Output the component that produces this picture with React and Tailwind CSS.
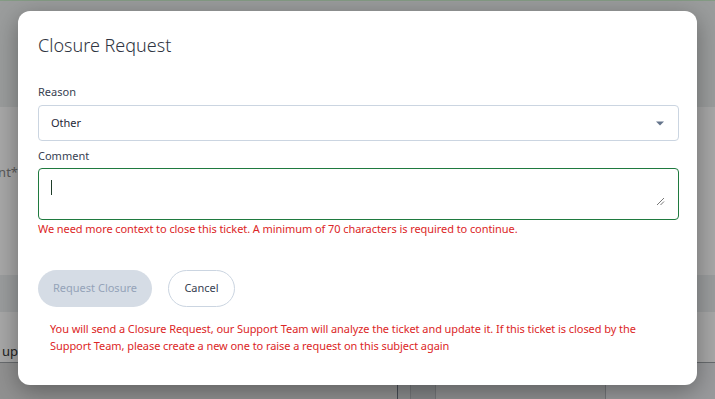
const FONT = { fontFamily: '"Noto Sans", "Open Sans", sans-serif' };

const Backdrop = () => (
  <div className="flex h-[399px] flex-col bg-[#e4e5e6]">
    <div className="h-px bg-[#c9ecc9]" />
    <div className="h-[106px] bg-[#eceeef]" />
    <div className="flex h-[168px] bg-white">
      <div className="flex w-[18px] justify-end overflow-hidden pt-[56px]">
        <span className="whitespace-nowrap text-[13px] text-[#8a8a8a]">Attachment*</span>
      </div>
    </div>
    <div className="h-[37px] bg-[#eceef0]" />
    <div className="flex h-[51px] border-b border-[#9ea3a8] bg-white">
      <div className="flex w-[18px] items-end justify-end overflow-hidden pb-[1px]">
        <span className="whitespace-nowrap text-[13px] text-[#333]">Follow up</span>
      </div>
    </div>
    <div className="flex flex-1">
      <div className="w-[397px] bg-[#dcdcdc]" />
      <div className="w-[13px] border-l border-[#6b7280] bg-[#d4d6d8]" />
      <div className="w-[25px] border-l border-[#b0b4b8] bg-[#c8cbcf]" />
      <div className="w-[170px] border-l border-[#b0b4b8] bg-[#dadbdc]" />
      <div className="flex-1 border-l border-[#b0b4b8] bg-[#e8eaed]" />
    </div>
  </div>
);

export default function App() {
  return (
    <div className="relative h-[399px] w-[715px] overflow-hidden" style={FONT}>
      <Backdrop />
      <div className="absolute inset-0 flex justify-center bg-black/[0.34] pt-[11px]">
        <div className="flex h-[374px] w-[679px] flex-col rounded-xl bg-white pl-5 pr-[18px] pt-[20px] shadow-[0_6px_24px_rgba(0,0,0,0.35)]">
          <h2 className="text-[18px] leading-7 font-light text-[#2f3542]">Closure Request</h2>

          <label className="mt-[25px] h-4 text-[11px] leading-4 text-[#374151]">Reason</label>
          <div className="mt-[5px] flex h-[36px] items-center justify-between rounded border border-[#cbd5e1] px-3">
            <span className="text-[11px] text-[#1f2937]">Other</span>
            <svg width="10" height="6" viewBox="0 0 10 6" className="mr-[1px]">
              <path d="M1 1.5h8L5 5.5z" fill="#64748b" />
            </svg>
          </div>

          <label className="mt-[7px] h-4 text-[11px] leading-4 text-[#374151]">Comment</label>
          <div className="relative mt-[4px] flex h-[52px] rounded border border-[#1f7a3f] px-3 pt-[11px]">
            <span className="h-[15px] w-px bg-[#1f3d2a]" />
            <svg width="10" height="10" viewBox="0 0 10 10" className="absolute bottom-[13px] right-[13px]">
              <path d="M2 9L9 2M5.5 9L9 5.5" stroke="#555" strokeWidth="0.8" />
            </svg>
          </div>
          <p className="mt-px text-[11px] leading-4 tracking-[-0.07px] text-[#dc2626]">
            We need more context to close this ticket. A minimum of 70 characters is required to continue.
          </p>

          <div className="mt-[33px] flex gap-4">
            <button className="h-[37px] w-[114px] rounded-full bg-[#d5dce5] text-[11px] text-[#94a3b8]">
              Request Closure
            </button>
            <button className="h-[37px] w-[67px] rounded-full border border-[#cbd5e1] bg-white text-[11px] text-[#374151]">
              Cancel
            </button>
          </div>

          <p className="mt-[13px] pl-3 pr-4 text-[11px] leading-[17px] tracking-[-0.07px] text-[#dc2626]">
            You will send a Closure Request, our Support Team will analyze the ticket and update it. If this ticket is closed by the
            Support Team, please create a new one to raise a request on this subject again
          </p>
        </div>
      </div>
    </div>
  );
}
